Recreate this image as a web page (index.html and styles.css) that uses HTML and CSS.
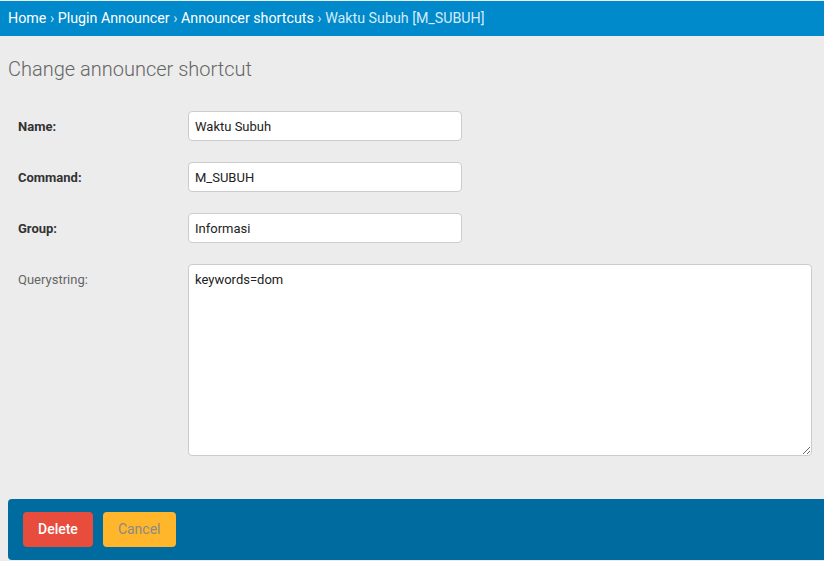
FILE: index.html
```html
<!DOCTYPE html>
<html lang="en">
<head>
    <meta charset="UTF-8">
    <title>Change announcer shortcut</title>
    <link rel="stylesheet" href="styles.css">
</head>
<body>
    <div class="breadcrumbs">
        <a href="#">Home</a> &rsaquo;
        <a href="#">Plugin Announcer</a> &rsaquo;
        <a href="#">Announcer shortcuts</a> &rsaquo;
        <span class="current">Waktu Subuh [M_SUBUH]</span>
    </div>
    <div class="content">
        <h1>Change announcer shortcut</h1>
        <form>
            <div class="form-row">
                <label class="required" for="id_name">Name:</label>
                <input type="text" class="vTextField" id="id_name" value="Waktu Subuh">
            </div>
            <div class="form-row">
                <label class="required" for="id_command">Command:</label>
                <input type="text" class="vTextField" id="id_command" value="M_SUBUH">
            </div>
            <div class="form-row">
                <label class="required" for="id_group">Group:</label>
                <input type="text" class="vTextField" id="id_group" value="Informasi">
            </div>
            <div class="form-row">
                <label for="id_querystring">Querystring:</label>
                <textarea id="id_querystring" class="vLargeTextField">keywords=dom</textarea>
            </div>
            <div class="submit-row">
                <a href="#" class="btn deletelink">Delete</a>
                <a href="#" class="btn cancel-link">Cancel</a>
            </div>
        </form>
    </div>
</body>
</html>
```
FILE: styles.css
```css
:root{
    --header-bg: #0089cb;
    --submit-bg: #006b9f;
    --page-bg: #ececec;
    --delete: #e74c3c;
    --cancel: #ffb62b;
}
*{
    box-sizing: border-box;
}
body{
    margin: 0;
    padding-top: 1px;
    background: var(--page-bg);
    font-family: Roboto, "Liberation Sans", sans-serif;
    font-size: 13px;
    color: #333;
    overflow: hidden;
}
.breadcrumbs{
    background: var(--header-bg);
    color: #c5e6f6;
    height: 35px;
    padding: 7px 8px 0;
    font-size: 14.25px;
    line-height: 20px;
}
.breadcrumbs a{
    color: #fff;
    text-decoration: none;
}
.breadcrumbs .current{
    color: #d4ecf8;
}
.content{
    padding: 0 0 0 8px;
}
h1{
    margin: 21px 0 22px;
    font-size: 20px;
    font-weight: 300;
    color: #666;
    line-height: 24px;
}
.form-row{
    display: flex;
    align-items: flex-start;
    padding: 8px 0 13px 10px;
}
.form-row label{
    width: 170px;
    flex: none;
    padding-top: 8px;
    line-height: 15px;
    color: #666;
}
.form-row label.required{
    font-weight: 700;
    color: #333;
}
.vTextField,
.vLargeTextField{
    font-family: Roboto, "Liberation Sans", sans-serif;
    font-size: 13px;
    color: #222;
    background: #fff;
    border: 1px solid #ccc;
    border-radius: 4px;
    padding: 5px 6px;
}
.vTextField{
    width: 274px;
    height: 30px;
}
.vLargeTextField{
    width: 624px;
    height: 192px;
    resize: both;
    padding: 7px 6px 6px;
}
.submit-row{
    display: flex;
    gap: 10px;
    margin-top: 30px;
    height: 61px;
    padding: 13px 15px;
    background: var(--submit-bg);
    border-radius: 4px 0 0 4px;
}
.btn{
    display: inline-block;
    height: 35px;
    line-height: 35px;
    padding: 0 15px;
    border-radius: 4px;
    font-size: 14px;
    text-decoration: none;
}
.deletelink{
    background: var(--delete);
    color: #fff;
    font-weight: 500;
}
.cancel-link{
    background: var(--cancel);
    color: #8a8a8a;
}
```
